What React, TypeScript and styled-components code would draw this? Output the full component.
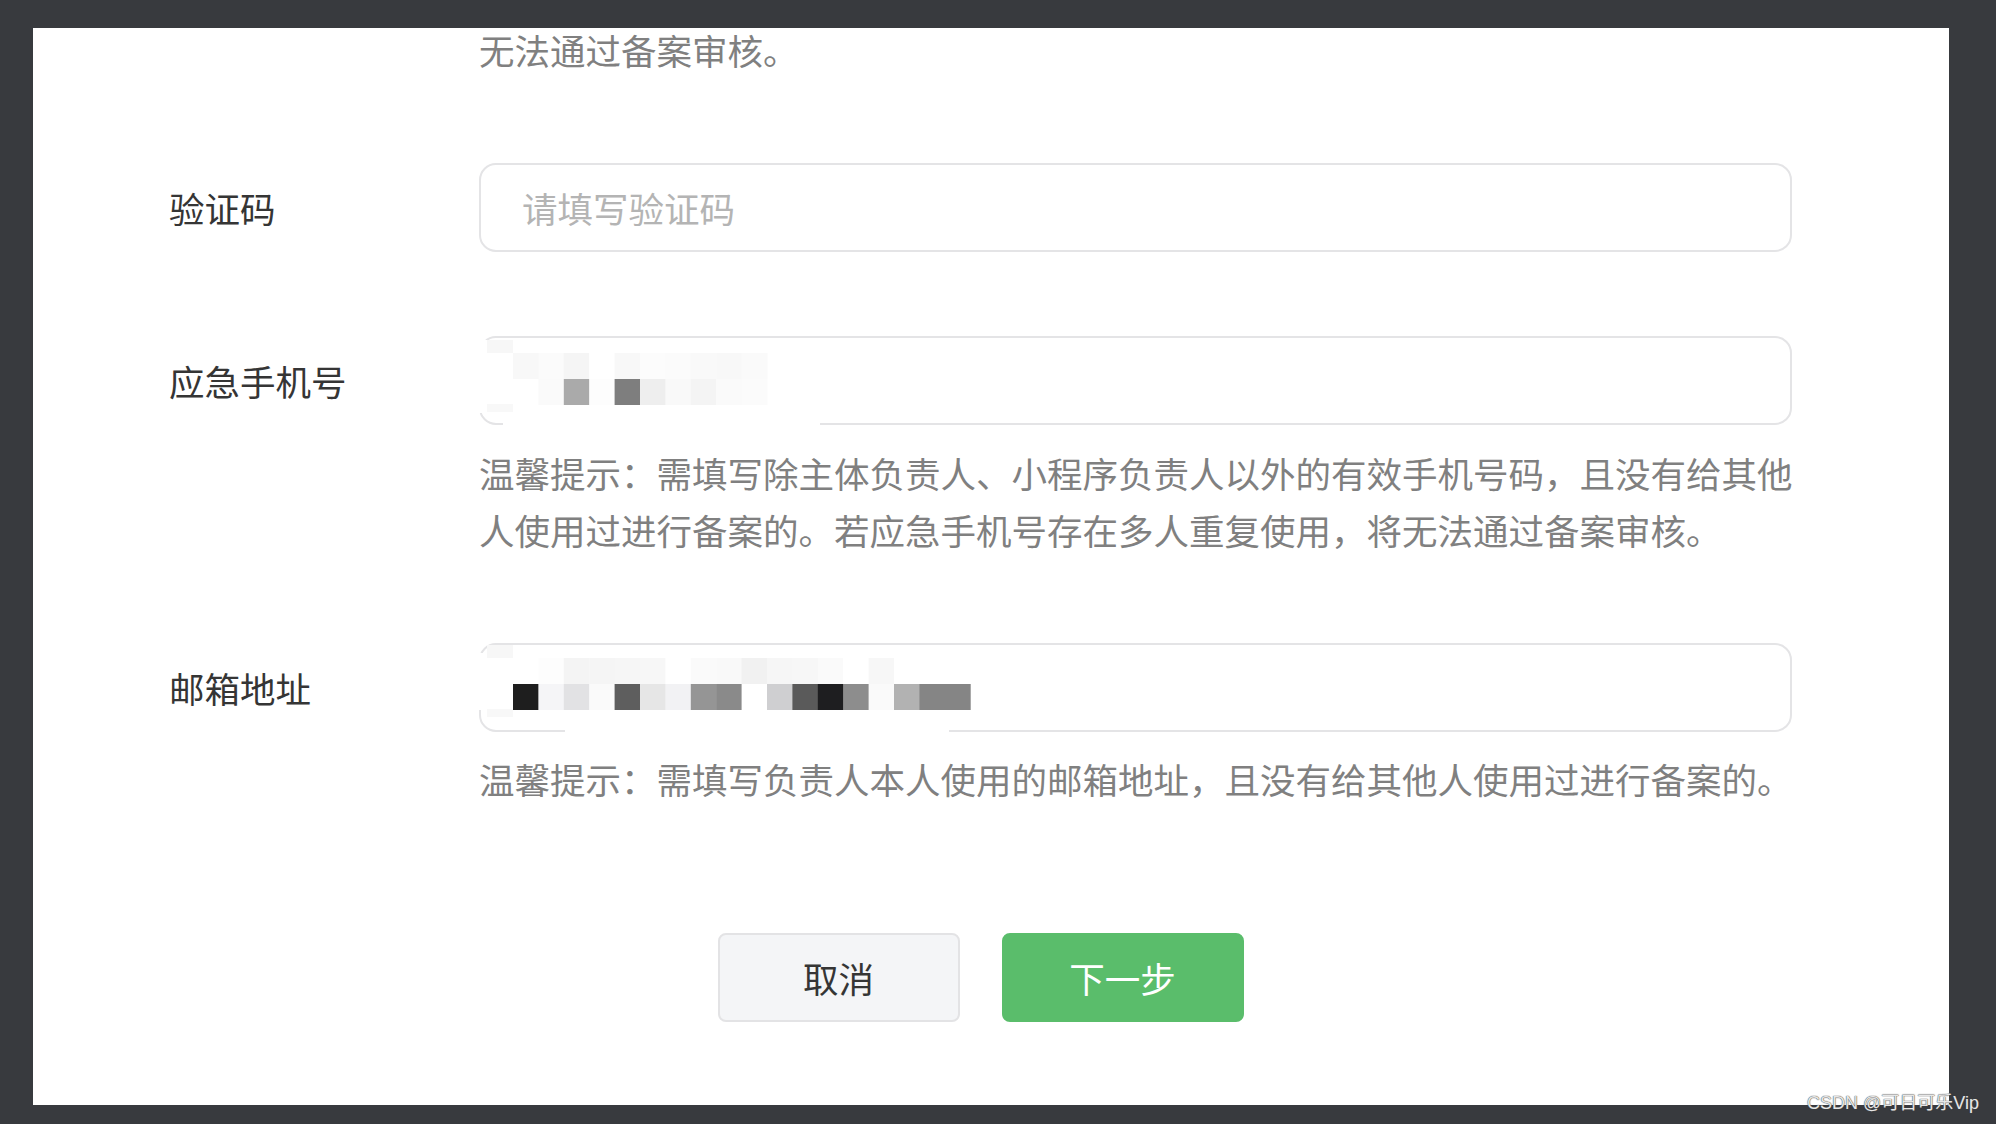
import React from "react";
import styled, { createGlobalStyle } from "styled-components";

const GlobalStyle = createGlobalStyle`
  html, body {
    margin: 0;
    padding: 0;
    background: #383a3e;
  }
  body {
    width: 1996px;
    height: 1124px;
    overflow: hidden;
    font-family: "Noto Sans CJK SC", "Noto Sans", sans-serif;
  }
`;

const Frame = styled.div`
  position: relative;
  width: 1996px;
  height: 1124px;
  padding: 28px 47px 19px 33px;
  box-sizing: border-box;
`;

const Panel = styled.div`
  height: 100%;
  background: #ffffff;
  padding: 0 157px 0 136px;
  box-sizing: border-box;
  display: flex;
  flex-direction: column;
`;

const Row = styled.div<{ $gap?: number }>`
  display: grid;
  grid-template-columns: 310px 1fr;
  margin-top: ${(p) => p.$gap ?? 82.5}px;
`;

const Label = styled.div`
  font-size: 35.5px;
  line-height: 89px;
  color: #353535;
`;

const Control = styled.div`
  min-width: 0;
`;

const Hint = styled.p`
  margin: 18.5px 0 2.5px;
  width: 1325px;
  font-size: 35.5px;
  line-height: 57px;
  color: #808080;
`;

// last line of the previous field's note, the rest is scrolled out of view
const Tail = styled.p`
  margin: 1.5px 0 0;
  font-size: 35.5px;
  line-height: 40px;
  color: #808080;
`;

const Field = styled.div`
  position: relative;
`;

const Input = styled.input`
  display: block;
  width: 100%;
  height: 89px;
  box-sizing: border-box;
  border: 2px solid #e4e4e6;
  border-radius: 17px;
  padding: 0 41px;
  background: #fff;
  font-family: inherit;
  font-size: 35.5px;
  color: #353535;
  outline: none;

  &::placeholder {
    color: #b4b4b4;
  }
`;

const Mosaic = styled.svg`
  position: absolute;
  left: -3px;
  top: 0;
  overflow: visible;
  pointer-events: none;
`;

const Actions = styled.div`
  display: flex;
  justify-content: center;
  gap: 42px;
  margin-top: 123px;
`;

const Button = styled.button<{ $primary?: boolean }>`
  width: 242px;
  height: 89px;
  box-sizing: border-box;
  border-radius: 8px;
  border: 2px solid ${(p) => (p.$primary ? "#5abd6b" : "#e3e3e5")};
  background: ${(p) => (p.$primary ? "#5abd6b" : "#f4f5f7")};
  color: ${(p) => (p.$primary ? "#ffffff" : "#353535")};
  font-family: inherit;
  font-size: 35.5px;
  cursor: pointer;
`;

const Watermark = styled.div`
  position: absolute;
  right: 17px;
  bottom: 10px;
  font-family: "Liberation Sans", "Noto Sans CJK SC", sans-serif;
  font-size: 18px;
  line-height: 22px;
  color: #e6e6e6;
  text-shadow: 0 0 1px #4a4a4a, 0 0 1px #4a4a4a;
`;

// pixelated blobs left over from the redacted values
const phoneTop = ["#f8f8f8", "#fbfbfb", "#f5f5f5", "#ffffff", "#f8f8f8", "#fcfcfc", "#fbfbfb", "#f9f9f9", "#f8f8f8", "#fafafa"];
const phoneBottom = ["#ffffff", "#fafafa", "#aaaaaa", "#fdfdfd", "#7e7e7e", "#eeeeee", "#f9f9f9", "#f4f4f4", "#fafafa", "#fbfbfb"];

const mailTop = ["#ffffff", "#fdfdfd", "#f4f4f4", "#f5f5f5", "#f6f6f6", "#f7f7f7", "#ffffff", "#fafafa", "#f9f9f9", "#f1f1f1", "#f6f6f6", "#f7f7f7", "#fafafa", "#ffffff", "#f7f7f7", "#ffffff", "#ffffff", "#ffffff"];
const mailBottom = ["#1e1e1e", "#f5f5f7", "#e2e2e4", "#fafafa", "#5e5e5e", "#e6e6e6", "#f2f2f4", "#959595", "#8a8a8a", "#ffffff", "#cfcfd1", "#5a5a5a", "#1e1e20", "#8d8d8d", "#fafafa", "#b2b2b2", "#858585", "#858585"];

type Cover = { x: number; y: number; w: number; h: number };

function Pixels({
  top,
  bottom,
  y,
  covers,
}: {
  top: string[];
  bottom: string[];
  y: number;
  covers: Cover[];
}) {
  const cell = 25.4;
  const x0 = 37;
  return (
    <Mosaic width={1000} height={95}>
      {covers.map((c, i) => (
        <rect key={"c" + i} x={c.x} y={c.y} width={c.w} height={c.h} fill="#ffffff" />
      ))}
      <rect x={11} y={y - 13} width={26} height={13} fill="#f7f7f7" />
      <rect x={11} y={y + 51} width={26} height={8} fill="#f8f8f8" />
      {top.map((c, i) => (
        <rect key={"t" + i} x={x0 + i * cell} y={y} width={cell + 0.5} height={26} fill={c} />
      ))}
      {bottom.map((c, i) => (
        <rect key={"b" + i} x={x0 + i * cell} y={y + 26} width={cell + 0.5} height={26} fill={c} />
      ))}
    </Mosaic>
  );
}

export default function App() {
  return (
    <>
      <GlobalStyle />
      <Frame>
        <Panel>
          <Row $gap={0}>
            <div />
            <Tail>无法通过备案审核。</Tail>
          </Row>

          <Row $gap={93.5}>
            <Label>验证码</Label>
            <Control>
              <Input placeholder="请填写验证码" />
            </Control>
          </Row>

          <Row $gap={84}>
            <Label>应急手机号</Label>
            <Control>
              <Field>
                <Input aria-label="应急手机号" />
                <Pixels
                  top={phoneTop}
                  bottom={phoneBottom}
                  y={17}
                  covers={[
                    { x: 0, y: 4, w: 12, h: 73 },
                    { x: 27, y: 84, w: 317, h: 8 },
                  ]}
                />
              </Field>
              <Hint>
                温馨提示：需填写除主体负责人、小程序负责人以外的有效手机号码，且没有给其他人使用过进行备案的。若应急手机号存在多人重复使用，将无法通过备案审核。
              </Hint>
            </Control>
          </Row>

          <Row>
            <Label>邮箱地址</Label>
            <Control>
              <Field>
                <Input aria-label="邮箱地址" />
                <Pixels
                  top={mailTop}
                  bottom={mailBottom}
                  y={15}
                  covers={[
                    { x: 0, y: 10, w: 12, h: 57 },
                    { x: 89, y: 84, w: 384, h: 8 },
                  ]}
                />
              </Field>
              <Hint>
                温馨提示：需填写负责人本人使用的邮箱地址，且没有给其他人使用过进行备案的。
              </Hint>
            </Control>
          </Row>

          <Actions>
            <Button>取消</Button>
            <Button $primary>下一步</Button>
          </Actions>
        </Panel>
        <Watermark>CSDN @可日可乐Vip</Watermark>
      </Frame>
    </>
  );
}
